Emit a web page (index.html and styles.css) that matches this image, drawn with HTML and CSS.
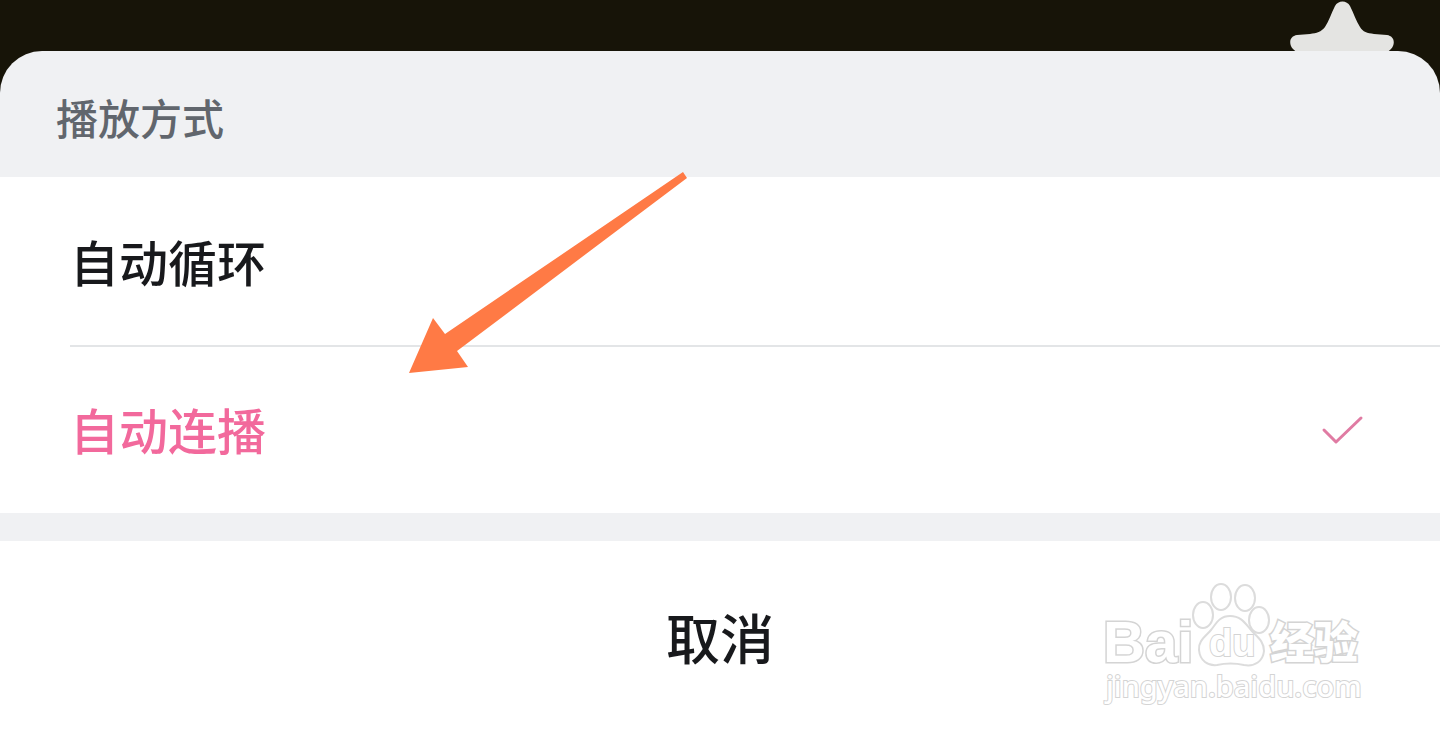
FILE: index.html
```html
<!DOCTYPE html>
<html lang="zh-CN">
<head>
    <meta charset="UTF-8">
    <meta name="viewport" content="width=device-width, initial-scale=1.0">
    <title>播放方式</title>
    <link rel="stylesheet" href="styles.css">
</head>
<body>
    <!-- Video area behind the sheet -->
    <div class="backdrop">
        <svg class="star" viewBox="0 0 106 100" aria-hidden="true">
            <path d="M46 5C49 -1 58 -1 61 5C65 13 67 20 71 26C74 31 78 32 85 33L98 34C105 35 107 42 102 48L82 66L88 92C89 98 84 101 78 98L53 86L28 98C22 101 17 98 18 92L24 66L4 48C-1 42 1 35 8 34L21 33C28 32 32 31 36 26C40 20 42 13 46 5Z"/>
        </svg>
    </div>

    <!-- Bottom sheet -->
    <form class="sheet">
        <h1 class="sheet-title">播放方式</h1>

        <div class="options">
            <label class="option">
                <input type="radio" name="play-mode" value="loop">
                <span class="option-text">自动循环</span>
                <svg class="check" viewBox="0 0 42 30" aria-hidden="true"><path d="M2 16L14 28L39 4"/></svg>
            </label>
            <label class="option">
                <input type="radio" name="play-mode" value="next" checked>
                <span class="option-text">自动连播</span>
                <svg class="check" viewBox="0 0 42 30" aria-hidden="true"><path d="M2 16L14 28L39 4"/></svg>
            </label>

            <!-- Pointer to the selected option -->
            <svg class="arrow" viewBox="0 0 280 202" aria-hidden="true">
                <polygon points="0,201 24,146 36,162 274,0 278,6 48,179 59,195"/>
            </svg>
        </div>

        <div class="sheet-footer">
            <button type="button" class="cancel">取消</button>

            <!-- Watermark -->
            <svg class="watermark" viewBox="0 0 290 150" aria-hidden="true">
                <text class="mark-latin" x="13" y="92">Bai</text>
                <ellipse cx="113" cy="45" rx="10" ry="13"/>
                <ellipse cx="131" cy="27" rx="10" ry="13"/>
                <ellipse cx="155" cy="28" rx="10" ry="13"/>
                <ellipse cx="169" cy="50" rx="10" ry="13"/>
                <path d="M140 46C129 46 126 54 121 60C115 67 108 71 109 80C110 91 118 96 127 95C136 93 145 93 154 95C165 97 173 91 174 81C174 71 167 67 161 60C155 53 151 46 140 46Z"/>
                <text class="mark-du" x="119" y="86">du</text>
                <text class="mark-cjk" x="180" y="89">经验</text>
                <text class="mark-url" x="16" y="127">jingyan.baidu.com</text>
            </svg>
        </div>
    </form>
</body>
</html>
```
FILE: styles.css
```css
body {
    display: flex;
    flex-direction: column;
    min-height: 100vh;
    margin: 0;
    background-color: #171408;
    color: #18191c;
    font-family: "Noto Sans CJK SC", sans-serif;
    font-weight: 500;
}

.backdrop {
    position: relative;
    height: 51px;
}

.star {
    position: absolute;
    top: 1px;
    right: 45px;
    width: 106px;
    height: 100px;
    fill: #e4e4e2;
}

.sheet {
    position: relative;
    display: flex;
    flex: 1;
    flex-direction: column;
    overflow: hidden;
    border-radius: 42px 42px 0 0;
    background-color: #f0f1f3; /* Light grey */
}

.sheet-title {
    margin: 0;
    padding: 36px 56px 30px;
    color: #61666d;
    font-size: 42px;
    font-weight: 500;
    line-height: 60px;
}

.options {
    position: relative;
    background-color: white;
}

.option {
    display: flex;
    align-items: center;
    justify-content: space-between;
    margin-left: 70px;
    padding: 48px 76px 48px 0;
    cursor: pointer;
    font-size: 49px;
    line-height: 72px;
}

.option + .option {
    padding-top: 46px;
    border-top: 2px solid #e3e5e7;
}

.option input {
    position: absolute;
    opacity: 0;
}

.check {
    display: none;
    width: 42px;
    height: 30px;
    overflow: visible;
    fill: none;
    stroke: #e07ba3;
    stroke-width: 3;
    stroke-linecap: round;
    stroke-linejoin: round;
}

.option input:checked ~ .option-text {
    color: #f2699c; /* Pink */
}

.option input:checked ~ .check {
    display: block;
}

.arrow {
    position: absolute;
    top: -5px;
    left: 409px;
    width: 280px;
    height: 202px;
    fill: #ff7a45;
    pointer-events: none;
}

.sheet-footer {
    position: relative;
    display: flex;
    flex: 1;
    margin-top: 28px;
    background-color: white;
}

.cancel {
    flex: 1;
    padding: 46px 0 50px;
    border: none;
    background: none;
    color: inherit;
    cursor: pointer;
    font: inherit;
    font-size: 54px;
    line-height: 80px;
}

.watermark {
    position: absolute;
    right: 60px;
    bottom: 17px;
    width: 290px;
    height: 150px;
    fill: white;
    stroke: #dcdcdc;
    stroke-width: 2;
    pointer-events: none;
}

.watermark text {
    stroke: #d4d4d4;
    paint-order: stroke;
}

.watermark .mark-latin {
    stroke-width: 3;
    font-family: "Liberation Sans", Arial, sans-serif;
    font-size: 58px;
    font-weight: bold;
}

.watermark .mark-du {
    font-family: "Liberation Sans", Arial, sans-serif;
    font-size: 38px;
    font-weight: bold;
}

.watermark .mark-cjk {
    stroke-width: 3;
    font-size: 44px;
    font-weight: 900;
}

.watermark .mark-url {
    font-family: "Noto Sans", sans-serif;
    font-size: 29px;
}
```
